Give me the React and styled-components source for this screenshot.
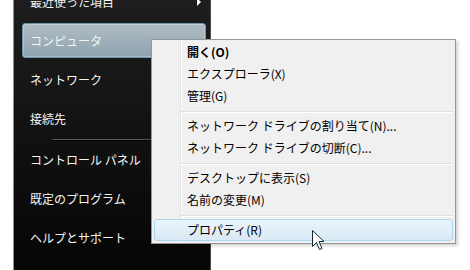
import React from 'react'
import styled, { createGlobalStyle } from 'styled-components'

const GlobalStyle = createGlobalStyle`
html, body {
  margin: 0;
  padding: 0;
  background: #fff;
  width: 470px;
  height: 270px;
  overflow: hidden;
}
`

const Stage = styled.div`
position: relative;
width: 470px;
height: 270px;
box-sizing: border-box;
padding-left: 13px;
display: flex;
font-family: "Noto Sans CJK JP", "Liberation Sans", sans-serif;
font-size: 12px;
`

const Panel = styled.div`
width: 198px;
height: 270px;
box-sizing: border-box;
border-left: 1px solid #8c8c8c;
border-right: 1px solid #4a4a4a;
background: linear-gradient(#1e1e1e, #050505);
overflow: hidden;
`

const List = styled.div`
display: flex;
flex-direction: column;
margin-top: -18px;
`

const Item = styled.div`
height: 35px;
margin: 2px 4px 2px 8px;
box-sizing: border-box;
border: 1px solid transparent;
border-radius: 3px;
padding: 0 4px 0 7px;
display: flex;
align-items: center;
justify-content: space-between;
color: #f4f4f4;
line-height: 16px;
${p => p.$active && `
  background: linear-gradient(#b0bcc4, #8ea3b0);
  border-color: #6d93aa;
  box-shadow: inset 0 0 0 1px rgba(255,255,255,0.25);
`}
`

const Arrow = styled.span`
width: 0;
height: 0;
border-left: 4px solid #fff;
border-top: 4px solid transparent;
border-bottom: 4px solid transparent;
`

const PanelSep = styled.div`
height: 0;
margin: 1px 4px -1px 38px;
border-top: 1px solid #575757;
border-bottom: 1px solid #000;
`

const Menu = styled.div`
position: absolute;
left: 151px;
top: 39px;
width: 305px;
box-sizing: border-box;
border: 1px solid #979797;
padding: 1px 2px 2px;
background: linear-gradient(to right, #f0f0f0 0 28px, #e2e3e3 28px 29px, #fff 29px 30px, #f0f0f0 30px);
box-shadow: 2px 2px 3px rgba(0,0,0,0.18);
display: flex;
flex-direction: column;
`

const MenuItem = styled.div`
height: 22px;
box-sizing: border-box;
border: 1px solid transparent;
border-radius: 3px;
padding-left: 32px;
display: flex;
align-items: center;
color: #000;
line-height: 16px;
font-weight: ${p => (p.$bold ? 700 : 400)};
${p => p.$hover && `
  background: linear-gradient(#ebf4fb, #d9e9f5);
  border-color: #a9d6f0;
`}
`

const MenuSep = styled.div`
height: 0;
margin: 4px 0 2px 27px;
border-top: 1px solid #e0e0e0;
border-bottom: 1px solid #fff;
`

const Cursor = styled.svg`
position: absolute;
left: 312px;
top: 230px;
`

const App = () => {
  return (
    <Stage>
      <GlobalStyle />
      <Panel>
        <List>
          <Item>最近使った項目<Arrow /></Item>
          <Item $active>コンピュータ</Item>
          <Item>ネットワーク</Item>
          <Item>接続先</Item>
          <PanelSep />
          <Item>コントロール パネル</Item>
          <Item>既定のプログラム</Item>
          <Item>ヘルプとサポート</Item>
        </List>
      </Panel>
      <Menu>
        <MenuItem $bold>開く(O)</MenuItem>
        <MenuItem>エクスプローラ(X)</MenuItem>
        <MenuItem>管理(G)</MenuItem>
        <MenuSep />
        <MenuItem>ネットワーク ドライブの割り当て(N)...</MenuItem>
        <MenuItem>ネットワーク ドライブの切断(C)...</MenuItem>
        <MenuSep />
        <MenuItem>デスクトップに表示(S)</MenuItem>
        <MenuItem>名前の変更(M)</MenuItem>
        <MenuSep />
        <MenuItem $hover>プロパティ(R)</MenuItem>
      </Menu>
      <Cursor width="14" height="22" viewBox="0 0 14 22">
        <path d="M0.5 0.5 L0.5 16.5 L4.5 12.5 L7.5 19.5 L10 18.5 L7 11.5 L12 11.5 Z" fill="#fff" stroke="#0b2a33" strokeWidth="1" strokeLinejoin="miter" />
      </Cursor>
    </Stage>
  )
}

export default App
